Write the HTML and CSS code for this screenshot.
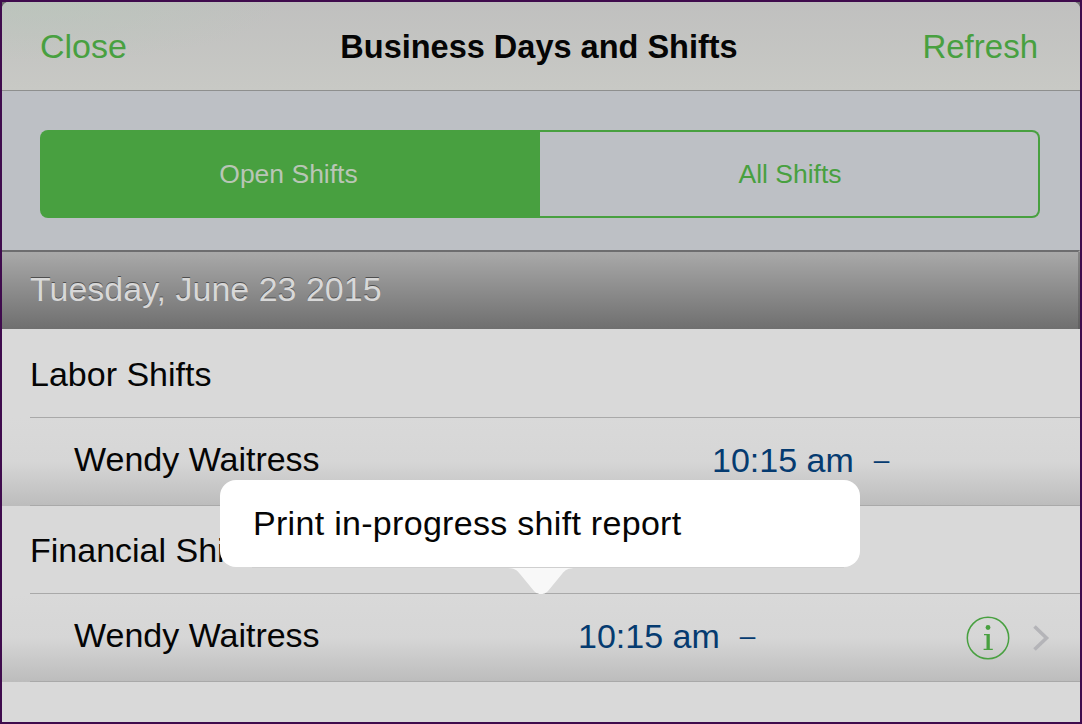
FILE: index.html
```html
<!DOCTYPE html>
<html lang="en">
<head>
<meta charset="utf-8">
<title>Business Days and Shifts</title>
<link rel="stylesheet" href="styles.css">
</head>
<body>
<div class="frame">
  <div class="panel">
    <header class="nav">
      <span class="nav-btn nav-close">Close</span>
      <h1 class="nav-title">Business Days and Shifts</h1>
      <span class="nav-btn nav-refresh">Refresh</span>
    </header>
    <div class="filter">
      <div class="segments">
        <div class="seg seg-on">Open Shifts</div>
        <div class="seg seg-off">All Shifts</div>
      </div>
    </div>
    <div class="date-head">Tuesday, June 23 2015</div>
    <div class="list">
      <div class="row row-first"><div class="row-in group">Labor Shifts</div></div>
      <div class="row row-shaded">
        <div class="row-in person">
          <span class="name name-wide">Wendy Waitress</span>
          <span class="time">10:15 am</span><span class="dash">–</span>
        </div>
      </div>
      <div class="row"><div class="row-in group">Financial Shifts</div></div>
      <div class="row row-shaded">
        <div class="row-in person">
          <span class="name name-narrow">Wendy Waitress</span>
          <span class="time">10:15 am</span><span class="dash">–</span>
          <span class="actions">
            <svg class="info" width="44" height="44" viewBox="0 0 44 44" aria-hidden="true">
              <circle cx="22" cy="22" r="20.7" fill="none" stroke="#48a040" stroke-width="1.5"/>
              <circle cx="22" cy="11.5" r="2.4" fill="#48a040"/>
              <path d="M18 18h5.8v14.8h3v1.2H17.6v-1.2h2.9V19.2H18z" fill="#48a040"/>
            </svg>
            <svg class="chev" width="18" height="28" viewBox="0 0 18 28" aria-hidden="true">
              <path d="M2.5 2.5 14.5 14 2.5 25.5" fill="none" stroke="#b4b4b8" stroke-width="3.6"/>
            </svg>
          </span>
        </div>
      </div>
    </div>
  </div>
  <div class="tip">
    <div class="tip-box">Print in-progress shift report</div>
    <svg class="tip-arrow" width="70" height="26" viewBox="0 0 70 26" aria-hidden="true">
      <path d="M0 0H70C62 0 59 2 56 6L42 23C39 26 37 26 35 26S31 26 28 23L14 6C11 2 8 0 0 0Z" fill="#f8f8f8"/>
    </svg>
  </div>
</div>
</body>
</html>
```

FILE: styles.css
```css
* { box-sizing: border-box; }
html, body { margin: 0; padding: 0; }
body {
  width: 1082px;
  height: 724px;
  overflow: hidden;
  font-family: "Liberation Sans", Arial, sans-serif;
}
.frame {
  position: relative;
  width: 1082px;
  height: 724px;
  border: 2px solid #3f0b4d;
  background: #6e6e70;
}
.panel {
  height: 100%;
  border-radius: 7px 7px 0 0;
  overflow: hidden;
  background: #d9d9d9;
  display: flex;
  flex-direction: column;
}
.nav {
  height: 89px;
  flex: none;
  display: grid;
  grid-template-columns: 1fr auto 1fr;
  align-items: center;
  padding: 0 42px 0 38px;
  border-bottom: 1px solid #8e8f8e;
  background:
    radial-gradient(ellipse 240px 60px at 40px 0, rgba(184,200,186,.55), rgba(184,200,186,0)),
    linear-gradient(#c0c0bf, #c8c9c5);
}
.nav-btn {
  color: #48a040;
  line-height: 1;
}
.nav-close { font-size: 34px; }
.nav-refresh { font-size: 33px; text-align: right; }
.nav-title {
  margin: 0;
  padding-top: 2px;
  font-size: 32.5px;
  font-weight: 700;
  color: #050505;
  line-height: 1;
}
.filter {
  height: 159px;
  flex: none;
  padding: 39px 40px 0 38px;
  background: #bdc0c5;
}
.segments {
  display: flex;
  height: 88px;
  font-size: 26.5px;
}
.seg {
  display: flex;
  align-items: center;
  justify-content: center;
}
.seg-on {
  width: 500px;
  padding-right: 3px;
  background: #48a040;
  color: #b9c6b6;
  border-radius: 8px 0 0 8px;
}
.seg-off {
  flex: 1;
  padding-left: 2px;
  color: #48a040;
  border: 2px solid #48a040;
  border-left: 0;
  border-radius: 0 8px 8px 0;
}
.date-head {
  height: 79px;
  flex: none;
  padding: 0 0 2px 28px;
  display: flex;
  align-items: center;
  font-size: 34px;
  color: #d8d8d8;
  border-top: 2px solid #6d6d6f;
  border-right: 2px solid rgba(70, 70, 70, .35);
  background: linear-gradient(#a9a9a9, #6f6f6f);
  text-shadow: 0 -1px 0 #4f4f4f;
}
.list {
  flex: 1;
  background: #d9d9d9;
}
.row {
  height: 88px;
}
.row-first {
  height: 89px;
}
.row-shaded {
  background: linear-gradient(#d9d9d9 0, #d6d6d6 50%, #bcbcbc 100%);
}
.row-in {
  height: 100%;
  margin-left: 28px;
  border-bottom: 1px solid #a9a9a9;
  display: flex;
  align-items: center;
  color: #050505;
  font-size: 34px;
}
.group { padding-top: 2px; }
.person {
  padding-left: 44px;
  padding-bottom: 4px;
}
.name-wide { width: 638px; }
.name-narrow { width: 504px; }
.time {
  color: #053b70;
  font-size: 34px;
  position: relative;
  top: 1px;
}
.dash {
  color: #053b70;
  font-size: 28px;
  margin-left: 20px;
}
.actions {
  margin-left: auto;
  margin-right: 30px;
  display: flex;
  align-items: center;
  gap: 22px;
  position: relative;
  top: 2px;
}
.info, .chev { display: block; }
.tip {
  position: absolute;
  left: 218px;
  top: 478px;
  width: 640px;
}
.tip-box {
  position: relative;
  height: 87px;
  padding: 0 0 0 33px;
  border-radius: 16px;
  background: #fff;
  color: #050505;
  font-size: 34px;
  letter-spacing: .3px;
  line-height: 87px;
}
.tip-box::after {
  content: "";
  position: absolute;
  left: 32px;
  right: 16px;
  bottom: -1px;
  height: 1px;
  background: #cfcfcf;
}
.tip-arrow {
  display: block;
  margin: 1px 0 0 286px;
}
```
